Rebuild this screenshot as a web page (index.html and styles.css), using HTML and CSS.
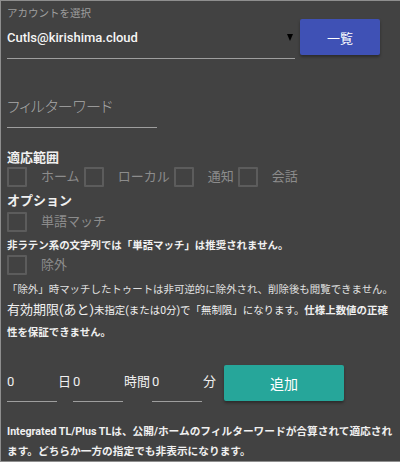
FILE: index.html
```html
<!DOCTYPE html>
<html lang="ja">
<head>
<meta charset="utf-8">
<link rel="stylesheet" href="styles.css">
</head>
<body>
<div class="panel">
  <div class="account-row">
    <div class="select-field">
      <div class="field-label">アカウントを選択</div>
      <div class="select-value">
        <span>Cutls@kirishima.cloud</span>
        <span class="caret"></span>
      </div>
    </div>
    <button class="btn btn-indigo">一覧</button>
  </div>

  <div class="text-field filter-word">フィルターワード</div>

  <div class="section-title">適応範囲</div>
  <div class="check-row">
    <span class="box"></span><span class="check-label">ホーム</span>
    <span class="box"></span><span class="check-label">ローカル</span>
    <span class="box"></span><span class="check-label">通知</span>
    <span class="box"></span><span class="check-label">会話</span>
  </div>

  <div class="section-title opt">オプション</div>
  <div class="check-row r2">
    <span class="box"></span><span class="check-label">単語マッチ</span>
  </div>
  <div class="note bold n1">非ラテン系の文字列では「単語マッチ」は推奨されません。</div>
  <div class="check-row r3">
    <span class="box"></span><span class="check-label">除外</span>
  </div>
  <div class="note n2">「除外」時マッチしたトゥートは非可逆的に除外され、削除後も閲覧できません。</div>
  <div class="expire"><span class="expire-title">有効期限(あと)</span><span class="small">未指定(または0分)で「無制限」になります。</span><span class="small bold">仕様上数値の正確性を保証できません。</span></div>

  <div class="time-row">
    <div class="num-field">0</div><span class="unit">日</span>
    <div class="num-field">0</div><span class="unit">時間</span>
    <div class="num-field">0</div><span class="unit">分</span>
    <button class="btn btn-teal">追加</button>
  </div>

  <div class="note bold footer">Integrated TL/Plus TLは、公開/ホームのフィルターワードが合算されて適応されます。どちらか一方の指定でも非表示になります。</div>
</div>
</body>
</html>
```

FILE: styles.css
```css
html, body {
  margin: 0;
  padding: 0;
  background: #424242;
}
body {
  font-family: Roboto, "Noto Sans CJK JP", sans-serif;
  color: #f0f0f0;
  width: 400px;
  height: 462px;
  overflow: hidden;
}
.panel {
  box-sizing: border-box;
  width: 400px;
  height: 462px;
  border-top: 1px solid #8e8e8e;
  border-left: 1px solid #8e8e8e;
  border-bottom: 1px solid #8e8e8e;
  padding: 0 6px;
  background: #424242;
}
.account-row {
  display: flex;
  align-items: flex-start;
}
.select-field {
  width: 288px;
  border-bottom: 1px solid #9e9e9e;
}
.field-label {
  font-size: 10.5px;
  line-height: 13px;
  color: #9e9e9e;
  padding-top: 6px;
}
.select-value {
  display: flex;
  justify-content: space-between;
  align-items: center;
  font-size: 13px;
  font-weight: 500;
  line-height: 20px;
  padding: 8px 0 10px 0;
  color: #f5f5f5;
}
.caret {
  width: 0;
  height: 0;
  border-left: 3.5px solid transparent;
  border-right: 3.5px solid transparent;
  border-top: 7px solid #000;
  margin-right: 2px;
  margin-bottom: 2px;
}
.btn {
  border: none;
  border-radius: 2px;
  color: #fff;
  font-family: Roboto, "Noto Sans CJK JP", sans-serif;
  font-size: 13px;
  box-shadow: 0 2px 3px rgba(0,0,0,0.35);
  padding: 0;
}
.btn-indigo {
  background: #3f51b5;
  width: 80px;
  height: 36px;
  margin-left: 5px;
  margin-top: 18px;
}
.text-field {
  width: 150px;
  border-bottom: 1px solid #9e9e9e;
  font-size: 15px;
  font-weight: 300;
  font-feature-settings: "palt";
  line-height: 22px;
  color: #a8a8a8;
  padding: 5px 0 9px 0;
}
.filter-word {
  margin-top: 32px;
}
.section-title {
  font-size: 13px;
  font-weight: 700;
  line-height: 18px;
  margin-top: 21px;
  color: #f0f0f0;
}
.section-title.opt {
  margin-top: 5px;
}
.check-row {
  display: flex;
  align-items: center;
  height: 20px;
}
.check-row.r2 {
  margin-top: 2px;
}
.check-row.r3 {
  margin-top: 1px;
}
.box {
  box-sizing: border-box;
  width: 20px;
  height: 20px;
  border: 2px solid #5c5c5c;
  border-radius: 1px;
  flex: none;
}
.check-label {
  font-size: 13px;
  color: #8c8c8c;
  margin-left: 14px;
  margin-right: 4px;
  line-height: 20px;
}
.note {
  font-size: 10.45px;
  line-height: 16px;
  color: #e0e0e0;
  white-space: nowrap;
}
.note.n1 {
  margin-top: 6px;
}
.note.n2 {
  margin-top: 7px;
}
.bold {
  font-weight: 700;
  color: #f0f0f0;
}
.expire {
  line-height: 20px;
  margin-top: 1px;
  color: #f0f0f0;
}
.expire-title {
  font-size: 13px;
}
.small {
  font-size: 10.45px;
}
.time-row {
  display: flex;
  align-items: flex-start;
  margin-top: 22px;
}
.num-field {
  width: 50px;
  border-bottom: 1px solid #9e9e9e;
  font-size: 13px;
  line-height: 20px;
  margin-top: 7px;
  padding: 0 0 9px 0;
}
.unit {
  font-size: 13px;
  line-height: 20px;
  margin-top: 7px;
  margin-left: 1px;
  margin-right: 2px;
}
.btn-teal {
  background: #26a69a;
  width: 120px;
  height: 36px;
  margin-left: 6px;
  font-size: 14px;
}
.footer {
  margin-top: 20px;
  line-height: 20px;
  font-size: 10.7px;
  white-space: normal;
}
```
